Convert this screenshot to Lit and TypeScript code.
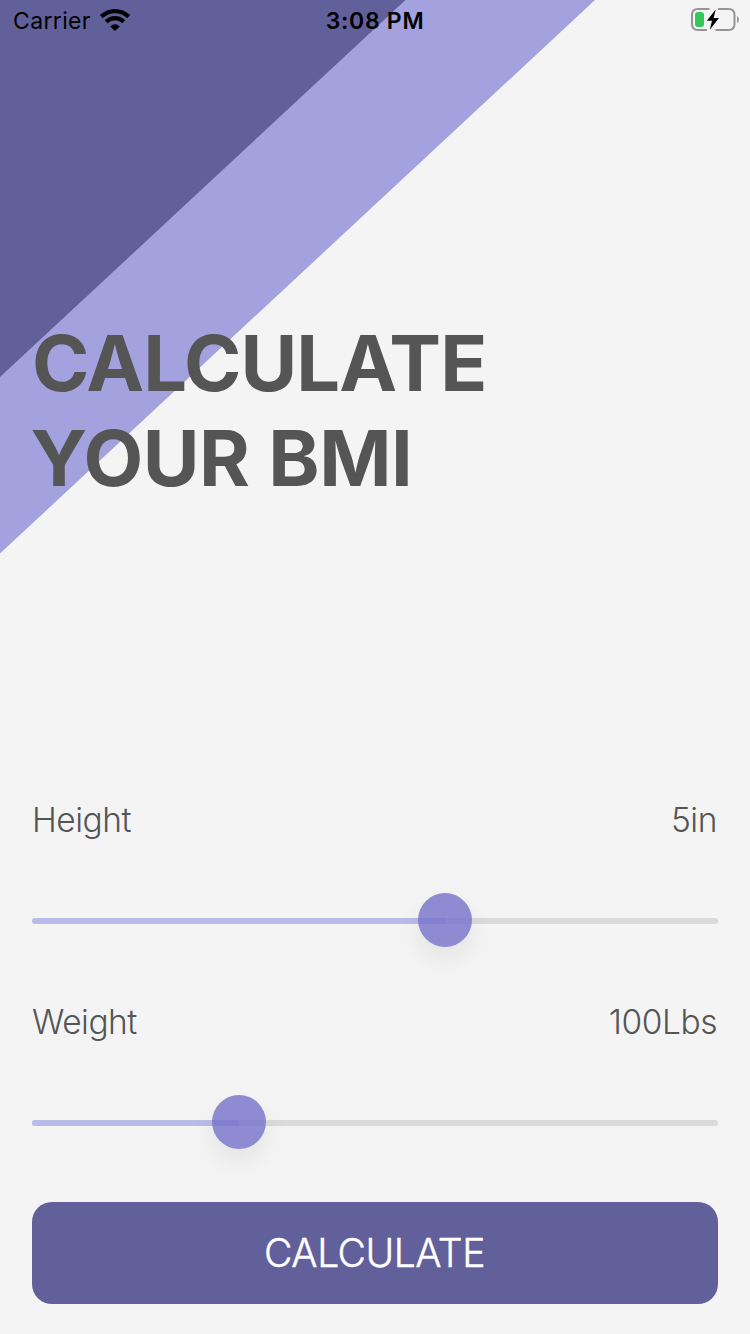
import { LitElement, html, css, svg } from "lit";
import { customElement, property } from "lit/decorators.js";

@customElement("status-bar")
class StatusBar extends LitElement {
  static styles = css`
    :host {
      display: grid;
      grid-template-columns: 1fr auto 1fr;
      height: 40px;
      color: #000;
      font-size: 23px;
      line-height: 42px;
      white-space: nowrap;
    }
    .carrier {
      display: flex;
      padding-left: 13px;
      gap: 9px;
      letter-spacing: 0.35px;
    }
    .time {
      font-weight: 600;
      letter-spacing: 0.7px;
    }
    .battery {
      display: flex;
      justify-content: flex-end;
      padding-right: 10px;
    }
    svg {
      display: block;
    }
  `;
  render() {
    return html`
      <div class="carrier">
        <span>Carrier</span>
        <svg width="30" height="40" viewBox="0 0 30 40" fill="none" stroke="#000" stroke-width="4.3">
          <path d="M1.4 16.7A19.3 19.3 0 0 1 28.6 16.7" />
          <path d="M6.2 21.8A12.4 12.4 0 0 1 23.8 21.8" />
          <path d="M15 31L10.2 26.5Q15 22.2 19.8 26.5Z" fill="#000" stroke="none" />
        </svg>
      </div>
      <div class="time">3:08 PM</div>
      <div class="battery">
        <svg width="50" height="40" viewBox="690 0 50 40">
          <path
            d="M709.5 9H698Q692 9 692 15V24Q692 30 698 30H707M718 9H728.5Q734.5 9 734.5 15V24Q734.5 30 728.5 30H715.5"
            fill="none" stroke="#949494" stroke-width="2" />
          <path d="M737 16Q739 17 739 19.5T737 23Z" fill="#949494" />
          <rect x="695" y="12" width="9" height="15" rx="3" fill="#34c759" />
          <path d="M715.7 9.5L706.8 20.7H712L709.8 29.7L719 18H713.6Z" fill="#000" />
        </svg>
      </div>
    `;
  }
}

@customElement("value-slider")
class ValueSlider extends LitElement {
  @property() label = "";
  @property() value = "";
  @property({ type: Number }) percent = 0;
  static styles = css`
    :host {
      display: block;
      height: 202px;
    }
    .row {
      display: flex;
      justify-content: space-between;
      font-size: 33.5px;
      line-height: 44px;
      font-weight: 300;
      color: #555;
    }
    .label {
      letter-spacing: -0.5px;
    }
    .value {
      letter-spacing: -0.45px;
      padding-right: 1px;
    }
    .track {
      position: relative;
      height: 6px;
      margin-top: 76px;
      border-radius: 3px;
      background: #dadadc;
    }
    .fill {
      height: 6px;
      border-radius: 3px 0 0 3px;
      background: #bbbbe7;
    }
    .thumb {
      position: absolute;
      top: -25px;
      width: 54px;
      height: 54px;
      margin-left: -27px;
      border-radius: 50%;
      background: rgba(116, 113, 203, 0.8);
      box-shadow: 0 12px 26px rgba(0, 0, 0, 0.07);
    }
  `;
  render() {
    return html`
      <div class="row">
        <span class="label">${this.label}</span><span class="value">${this.value}</span>
      </div>
      <div class="track">
        <div class="fill" style="width:${this.percent}%"></div>
        <div class="thumb" style="left:${this.percent}%"></div>
      </div>
    `;
  }
}

@customElement("app-root")
class AppRoot extends LitElement {
  static styles = css`
    :host {
      display: block;
      position: relative;
      height: 1334px;
      overflow: hidden;
      background: #f4f4f4;
      font-family: Inter, "Liberation Sans", sans-serif;
    }
    .backdrop {
      position: absolute;
      top: 0;
      left: 0;
    }
    .screen {
      position: relative;
      display: flex;
      flex-direction: column;
      height: 100%;
    }
    .content {
      flex: 1;
      display: flex;
      flex-direction: column;
      padding: 0 32px 30px;
    }
    h1 {
      margin: 276px 0 0;
      font-size: 77.6px;
      line-height: 95px;
      font-weight: 700;
      letter-spacing: -0.95px;
      color: #555;
    }
    .second {
      margin-left: -1.5px;
      letter-spacing: -0.5px;
      word-spacing: 1px;
    }
    .sliders {
      margin-top: auto;
      height: 404px;
    }
    button {
      height: 102px;
      border: 0;
      border-radius: 20px;
      background: #62609b;
      color: #fff;
      font: 300 39px/102px Inter, "Liberation Sans", sans-serif;
      -webkit-text-stroke: 0.45px #fff;
      letter-spacing: -0.45px;
      padding: 0 1px 0 0;
    }
  `;
  render() {
    return html`
      <svg class="backdrop" width="750" height="560" viewBox="0 0 750 560">
        ${svg`<path d="M0 0H595L0 553.5Z" fill="#a3a1de" /><path d="M0 0H405.5L0 377Z" fill="#62609a" />`}
      </svg>
      <div class="screen">
        <status-bar></status-bar>
        <div class="content">
          <h1>CALCULATE<br /><span class="second">YOUR BMI</span></h1>
          <div class="sliders">
            <value-slider label="Height" value="5in" percent="60.2"></value-slider>
            <value-slider label="Weight" value="100Lbs" percent="30.2"></value-slider>
          </div>
          <button>CALCULATE</button>
        </div>
      </div>
    `;
  }
}
